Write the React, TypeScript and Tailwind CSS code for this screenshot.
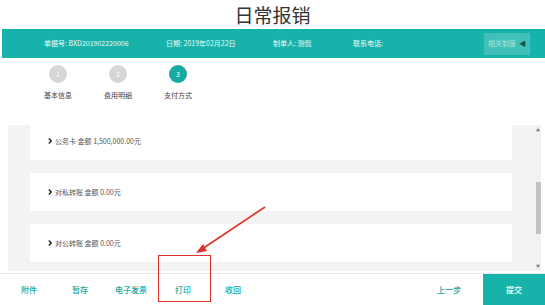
import React from 'react';

const steps = [
  { n: 1, label: '基本信息', active: false },
  { n: 2, label: '费用明细', active: false },
  { n: 3, label: '支付方式', active: true },
];

const payments = ['公务卡 金额 1,500,000.00元', '对私转账 金额 0.00元', '对公转账 金额 0.00元'];

export default function App() {
  return (
    <div className="relative h-[305px] w-[545px] overflow-hidden bg-white font-['Noto_Sans_CJK_SC','Liberation_Sans',sans-serif] text-[#333]">
      {/* Title */}
      <div className="flex h-[29px] items-center justify-center text-[19px] leading-none text-[#333]">日常报销</div>

      {/* Info bar */}
      <div className="ml-[2px] flex h-[29px] items-center bg-[#17b3aa] pl-[42px] text-[7px] text-[#e9fcfa]">
        <span className="w-[122px]">单据号: BXD201902220006</span>
        <span className="w-[107px]">日期: 2019年02月22日</span>
        <span className="w-[80px]">制单人: 测侃</span>
        <span>联系电话:</span>
        <div className="ml-auto mr-[15px] flex h-[22px] w-[46px] items-center justify-between bg-[#3fc1b9] px-[4px] text-[7px] text-[#a9e6e2]">
          <span>相关制度</span>
          <span className="text-[7px] text-[#12524f]">◀</span>
        </div>
      </div>

      {/* Steps */}
      <div className="flex pl-[28px] pt-[7px]">
        {steps.map((s) => (
          <div key={s.n} className="flex w-[60px] flex-col items-center">
            <div
              className={
                s.active
                  ? 'flex h-[18px] w-[18px] items-center justify-center rounded-full bg-[#17aaa2] text-[7px] text-white'
                  : 'flex h-[18px] w-[18px] items-center justify-center rounded-full bg-[#d6d6d6] text-[7px] text-white'
              }
            >
              {s.n}
            </div>
            <span className="mt-[7px] text-[7px] text-[#444]">{s.label}</span>
          </div>
        ))}
      </div>

      {/* Payment list */}
      <div className="absolute left-[8px] top-[125px] flex h-[146px] w-[533px] bg-[#f3f3f3]">
        <div className="flex flex-1 flex-col gap-[13px] overflow-hidden pl-[22px] pr-[23px]">
          {payments.map((p, i) => (
            <div
              key={p}
              className={
                i === 0
                  ? '-mt-[3px] flex h-[38px] shrink-0 items-center bg-white pl-[18px] text-[7px] text-[#555]'
                  : 'flex h-[38px] shrink-0 items-center bg-white pl-[18px] text-[7px] text-[#555]'
              }
            >
              <svg className="mr-[3px]" width="4" height="6" viewBox="0 0 4 6">
                <path d="M0.8 0.6 L3.2 3 L0.8 5.4" fill="none" stroke="#222" strokeWidth="1.4" />
              </svg>
              {p}
            </div>
          ))}
        </div>
        {/* scrollbar */}
        <div className="flex w-[6px] flex-col items-center bg-[#f1f1f1] py-[3px]">
          <span className="text-[4px] leading-none text-[#777]">▲</span>
          <div className="mt-[50px] h-[52px] w-[5px] bg-[#c1c1c1]" />
          <span className="mt-auto text-[4px] leading-none text-[#777]">▼</span>
        </div>
      </div>

      {/* Footer */}
      <div className="absolute bottom-0 left-0 flex h-[32px] w-[545px] items-center border-t border-[#e8e8e8] bg-white text-[8px] font-medium text-[#16a79f]">
        <div className="flex items-center pl-[21px]">
          <span className="w-[51px]">附件</span>
          <span className="w-[43px]">暂存</span>
          <span className="w-[60px]">电子发票</span>
          <span className="w-[50px]">打印</span>
          <span>收回</span>
        </div>
        <span className="ml-auto mr-[22px]">上一步</span>
        <div className="flex h-full w-[62px] items-center justify-center bg-[#17b3aa] text-white">提交</div>
      </div>

      {/* Annotation */}
      <div className="absolute left-[158px] top-[255px] h-[47px] w-[53px] border-[1.5px] border-[#e0302a]" />
      <svg className="absolute left-0 top-0" width="545" height="305" viewBox="0 0 545 305">
        <line x1="265" y1="207" x2="202" y2="249" stroke="#e0302a" strokeWidth="1.6" />
        <polygon points="196,253 203,244 207,251" fill="#e0302a" />
      </svg>
    </div>
  );
}
